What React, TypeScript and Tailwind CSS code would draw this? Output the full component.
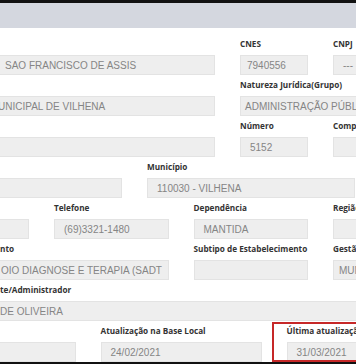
type FieldProps = {
  label?: string;
  value?: string;
  className: string;
  pad?: string;
  labelPad?: string;
};

function Field({ label = '', value = '', className, pad = 'pl-[9px]', labelPad = '' }: FieldProps) {
  return (
    <div className={`flex flex-col ${className}`}>
      <div
        className={`h-[21px] flex items-center whitespace-nowrap font-['Open_Sans',sans-serif] font-bold text-[8.2px] text-[#333] ${labelPad}`}
      >
        {label}
      </div>
      <div
        className={`h-[20px] flex items-center whitespace-nowrap overflow-hidden bg-[#eeeeee] border border-[#e3e3e3] font-['Liberation_Sans',Arial,sans-serif] text-[10px] text-[#858585] ${pad}`}
      >
        {value}
      </div>
    </div>
  );
}

export default function App() {
  return (
    <div className="relative w-[356px] h-[364px] overflow-hidden bg-white">
      <div className="h-[3px] bg-[#111]" />
      <div className="h-[25px] bg-[#d4d7df]" />
      <div className="h-[6px]" />

      <div className="ml-[-10px] w-[411px] grid grid-cols-[39px_repeat(8,21.5px)] gap-x-[25px]">
        {/* linha 1 */}
        <Field className="col-start-1 col-end-6" value="SAO FRANCISCO DE ASSIS" pad="pl-[14px]" />
        <Field className="col-start-6 col-end-8" label="CNES" value="7940556" pad="pl-[6px]" />
        <Field className="col-start-8 col-end-10" label="CNPJ" value="---" />

        {/* linha 2 */}
        <Field className="col-start-1 col-end-6" value="UNICIPAL DE VILHENA" pad="pl-[7px]" />
        <Field className="col-start-6 col-end-10" label="Natureza Jurídica(Grupo)" value="ADMINISTRAÇÃO PÚBLICA" pad="pl-[4px]" />

        {/* linha 3 */}
        <Field className="col-start-1 col-end-6" />
        <Field className="col-start-6 col-end-8" label="Número" value="5152" />
        <Field className="col-start-8 col-end-10" label="Complemento" />

        {/* linha 4 */}
        <Field className="col-start-1 col-end-4" />
        <Field className="col-start-4 col-end-9" label="Município" value="110030 - VILHENA" />

        {/* linha 5 */}
        <Field className="col-start-1 col-end-2" />
        <Field className="col-start-2 col-end-5" label="Telefone" value="(69)3321-1480" />
        <Field className="col-start-5 col-end-8" label="Dependência" value="MANTIDA" />
        <Field className="col-start-8 col-end-10" label="Região de Saúde" />

        {/* linha 6 */}
        <Field
          className="col-start-1 col-end-5"
          label="nto"
          labelPad="pl-[10px]"
          value="OIO DIAGNOSE E TERAPIA (SADT"
          pad="pl-[10px]"
        />
        <Field className="col-start-5 col-end-8" label="Subtipo de Estabelecimento" />
        <Field className="col-start-8 col-end-10" label="Gestão" value="MUNICIPAL" pad="pl-[5px]" />

        {/* linha 7 */}
        <Field
          className="col-start-1 col-end-10"
          label="te/Administrador"
          labelPad="pl-[10px]"
          value="DE OLIVEIRA"
          pad="pl-[9px]"
        />

        {/* linha 8 */}
        <Field className="col-start-1 col-end-3" />
        <Field className="col-start-3 col-end-7" label="Atualização na Base Local" value="24/02/2021" />
        <Field className="col-start-7 col-end-10" label="Última atualização Nacional" value="31/03/2021" />
      </div>

      <div className="h-[2px] bg-[#111]" />

      {/* destaque */}
      <div className="absolute left-[272px] top-[322px] w-[100px] h-[40px] border-2 border-[#c62828]" />
    </div>
  );
}
